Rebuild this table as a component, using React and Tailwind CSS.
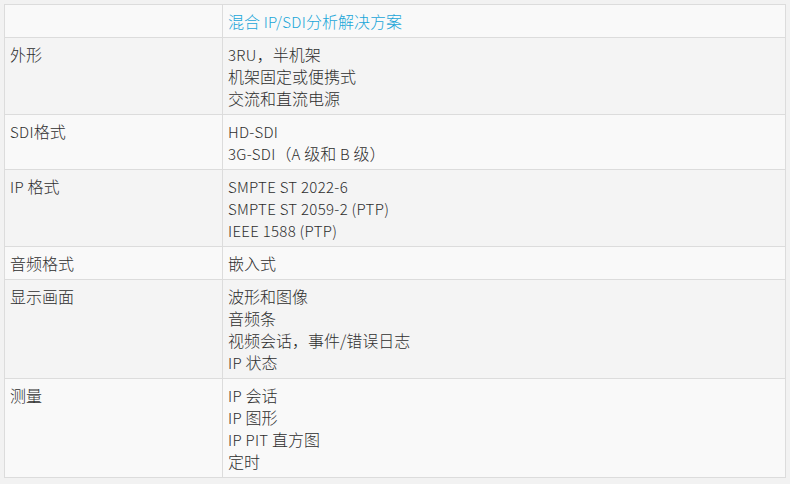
const rows = [
  { label: "外形", lines: ["3RU，半机架", "机架固定或便携式", "交流和直流电源"] },
  { label: "SDI格式", lines: ["HD-SDI", "3G-SDI（A 级和 B 级）"] },
  { label: "IP 格式", lines: ["SMPTE ST 2022-6", "SMPTE ST 2059-2 (PTP)", "IEEE 1588 (PTP)"] },
  { label: "音频格式", lines: ["嵌入式"] },
  { label: "显示画面", lines: ["波形和图像", "音频条", "视频会话，事件/错误日志", "IP 状态"] },
  { label: "测量", lines: ["IP 会话", "IP 图形", "IP PIT 直方图", "定时"] },
];

// latin runs are set a bit smaller than the CJK glyphs, like the source page
const Mixed = ({ text }) =>
  text.split(/([A-Za-z0-9\-\/\(\)\. ]+)/).map((part, i) =>
    /[A-Za-z0-9]/.test(part) ? (
      <span key={i} className="text-[15px] leading-none tracking-[0.3px]">
        {part}
      </span>
    ) : (
      <span key={i}>{part}</span>
    )
  );

export default function App() {
  return (
    <div
      className="min-h-[484px] bg-[#f2f2f2] pt-1 pl-1 text-[16px] font-light leading-[22px] text-[#2e2e2e]"
      style={{ fontFamily: '"Noto Sans CJK SC", "Noto Sans", sans-serif' }}
    >
      <table className="w-[782px] border-collapse border border-[#dcdcdc]">
        <tbody>
          {/* header row */}
          <tr className="bg-[#f9f9f9]">
            <td className="w-[218px] border border-[#dcdcdc] p-[5px] align-top"></td>
            <td className="border border-[#dcdcdc] p-[5px] align-top text-[#1aa6d8]">
              <div className="h-[22px]">
                <Mixed text="混合 IP/SDI分析解决方案" />
              </div>
            </td>
          </tr>
          {rows.map((row, i) => (
            <tr key={row.label} className={i % 2 === 0 ? "bg-[#f4f4f4]" : "bg-[#f9f9f9]"}>
              <td className="border border-[#dcdcdc] p-[5px] align-top">
                <div className="h-[22px]">
                  <Mixed text={row.label} />
                </div>
              </td>
              <td className="border border-[#dcdcdc] p-[5px] align-top">
                {row.lines.map((line) => (
                  <div key={line} className="h-[22px]">
                    <Mixed text={line} />
                  </div>
                ))}
              </td>
            </tr>
          ))}
        </tbody>
      </table>
    </div>
  );
}
